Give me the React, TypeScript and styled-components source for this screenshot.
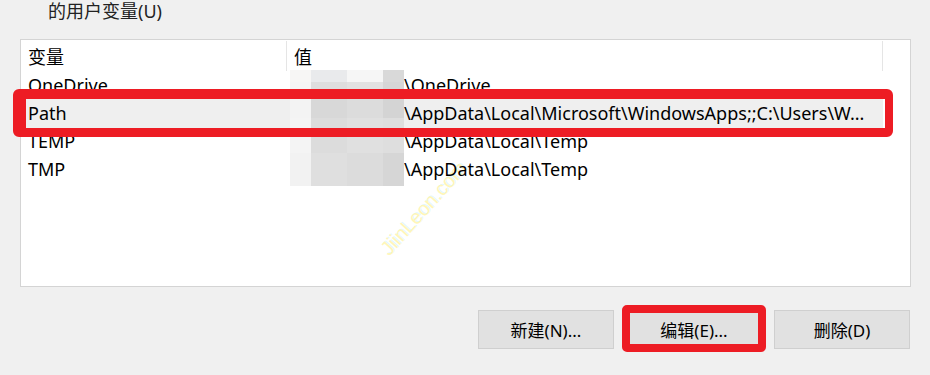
import React from "react";
import styled, { createGlobalStyle } from "styled-components";

const GlobalStyle = createGlobalStyle`
  html, body {
    margin: 0;
    padding: 0;
    background: #f0f0f0;
    overflow: hidden;
  }
  body {
    font-family: "Noto Sans", "Noto Sans CJK SC", sans-serif;
    color: #000;
  }
`;

const Page = styled.div`
  width: 930px;
  height: 375px;
  display: flex;
  flex-direction: column;
`;

const GroupLabel = styled.div`
  height: 39px;
  padding-left: 48px;
  padding-top: 1px;
  font-size: 18px;
  line-height: 20px;
  box-sizing: border-box;
  color: #222;
`;

const ListBox = styled.div`
  margin-left: 20px;
  width: 891px;
  height: 248px;
  box-sizing: border-box;
  background: #fff;
  border: 1px solid #d4d4d4;
  position: relative;
  font-size: 18px;
`;

const HeaderRow = styled.div`
  display: grid;
  grid-template-columns: 266px 596px 1fr;
  height: 31px;
  align-items: center;
`;

const HeadCell = styled.div`
  height: 30px;
  display: flex;
  align-items: center;
  padding-left: 7px;
  border-right: 1px solid #e5e5e5;
  box-sizing: border-box;
`;

const Row = styled.div<{ $selected?: boolean }>`
  display: grid;
  grid-template-columns: 266px 596px 1fr;
  height: ${({ $selected }) => ($selected ? "30px" : "28px")};
  margin: ${({ $selected }) => ($selected ? "-1px 0" : "0")};
  position: relative;
  ${({ $selected }) =>
    $selected
      ? `&::after {
    content: "";
    position: absolute;
    left: -8px;
    right: 17px;
    top: -9px;
    bottom: -9px;
    border-style: solid;
    border-color: #ed1c24;
    border-width: 10px 8px 9px 13px;
    border-radius: 6px;
    z-index: 3;
  }`
      : ""}
`;

const Cell = styled.div<{ $indent?: number; $selected?: boolean }>`
  padding-left: ${({ $indent }) => $indent ?? 7}px;
  white-space: nowrap;
  overflow: hidden;
  display: flex;
  align-items: center;
  position: relative;
  z-index: 1;
  background: ${({ $selected }) => ($selected ? "#efefef" : "transparent")};
`;

const Mosaic = styled.div`
  position: absolute;
  left: 269px;
  top: 30px;
  display: grid;
  grid-template-columns: 21px 36px 36px 21px;
  grid-template-rows: 12px 16px 20px 35px 33px;
  z-index: 2;
`;

const Tile = styled.div<{ $c: string }>`
  background: ${({ $c }) => $c};
`;

const Watermark = styled.div`
  position: absolute;
  left: 372px;
  top: 196px;
  font-size: 20px;
  line-height: 24px;
  font-family: "Liberation Sans", sans-serif;
  color: #fff6b8;
  text-shadow: 1px 0 0 rgba(190, 240, 255, 0.5);
  transform: rotate(-48deg);
  transform-origin: left bottom;
  z-index: 0;
  white-space: nowrap;
`;

const Buttons = styled.div`
  display: flex;
  justify-content: flex-end;
  gap: 12px;
  padding-right: 20px;
  margin-top: 23px;
`;

const Button = styled.div<{ $marked?: boolean }>`
  width: 136px;
  height: 39px;
  box-sizing: border-box;
  background: #e1e1e1;
  border: 1px solid #cfcfcf;
  display: flex;
  align-items: center;
  justify-content: center;
  font-size: 17px;
  position: relative;
  ${({ $marked }) =>
    $marked
      ? `&::after {
    content: "";
    position: absolute;
    left: -5px;
    right: -5px;
    top: -6px;
    bottom: -4px;
    border: 8px solid #ed1c24;
    border-radius: 5px;
  }`
      : ""}
`;

const tiles = [
  ["#f7f6f5", "#e9eaec", "#f6f6f6", "#d9d9d9"],
  ["#f5f5f5", "#dedede", "#e2e2e2", "#d6d6d6"],
  ["#f3f3f3", "#d8d8d8", "#dcdcdc", "#d4d4d4"],
  ["#f4f4f4", "#dcdcdc", "#e0e0e0", "#dedede"],
  ["#f2f2f2", "#dfdfdf", "#dcdcdc", "#d6d6d6"],
];

const vars = [
  { name: "OneDrive", value: "\\OneDrive" },
  { name: "Path", value: "\\AppData\\Local\\Microsoft\\WindowsApps;;C:\\Users\\W...", selected: true },
  { name: "TEMP", value: "\\AppData\\Local\\Temp" },
  { name: "TMP", value: "\\AppData\\Local\\Temp" },
];

export default function App() {
  return (
    <Page>
      <GlobalStyle />
      <GroupLabel>的用户变量(U)</GroupLabel>
      <ListBox>
        <HeaderRow>
          <HeadCell>变量</HeadCell>
          <HeadCell>值</HeadCell>
          <div />
        </HeaderRow>
        {vars.map((v) => (
          <Row key={v.name} $selected={v.selected}>
            <Cell $selected={v.selected}>{v.name}</Cell>
            <Cell $indent={117} $selected={v.selected}>
              {v.value}
            </Cell>
            <div />
          </Row>
        ))}
        <Mosaic>
          {tiles.flat().map((c, i) => (
            <Tile key={i} $c={c} />
          ))}
        </Mosaic>
        <Watermark>JiinLeon.com</Watermark>
      </ListBox>
      <Buttons>
        <Button>新建(N)...</Button>
        <Button $marked>编辑(E)...</Button>
        <Button>删除(D)</Button>
      </Buttons>
    </Page>
  );
}
